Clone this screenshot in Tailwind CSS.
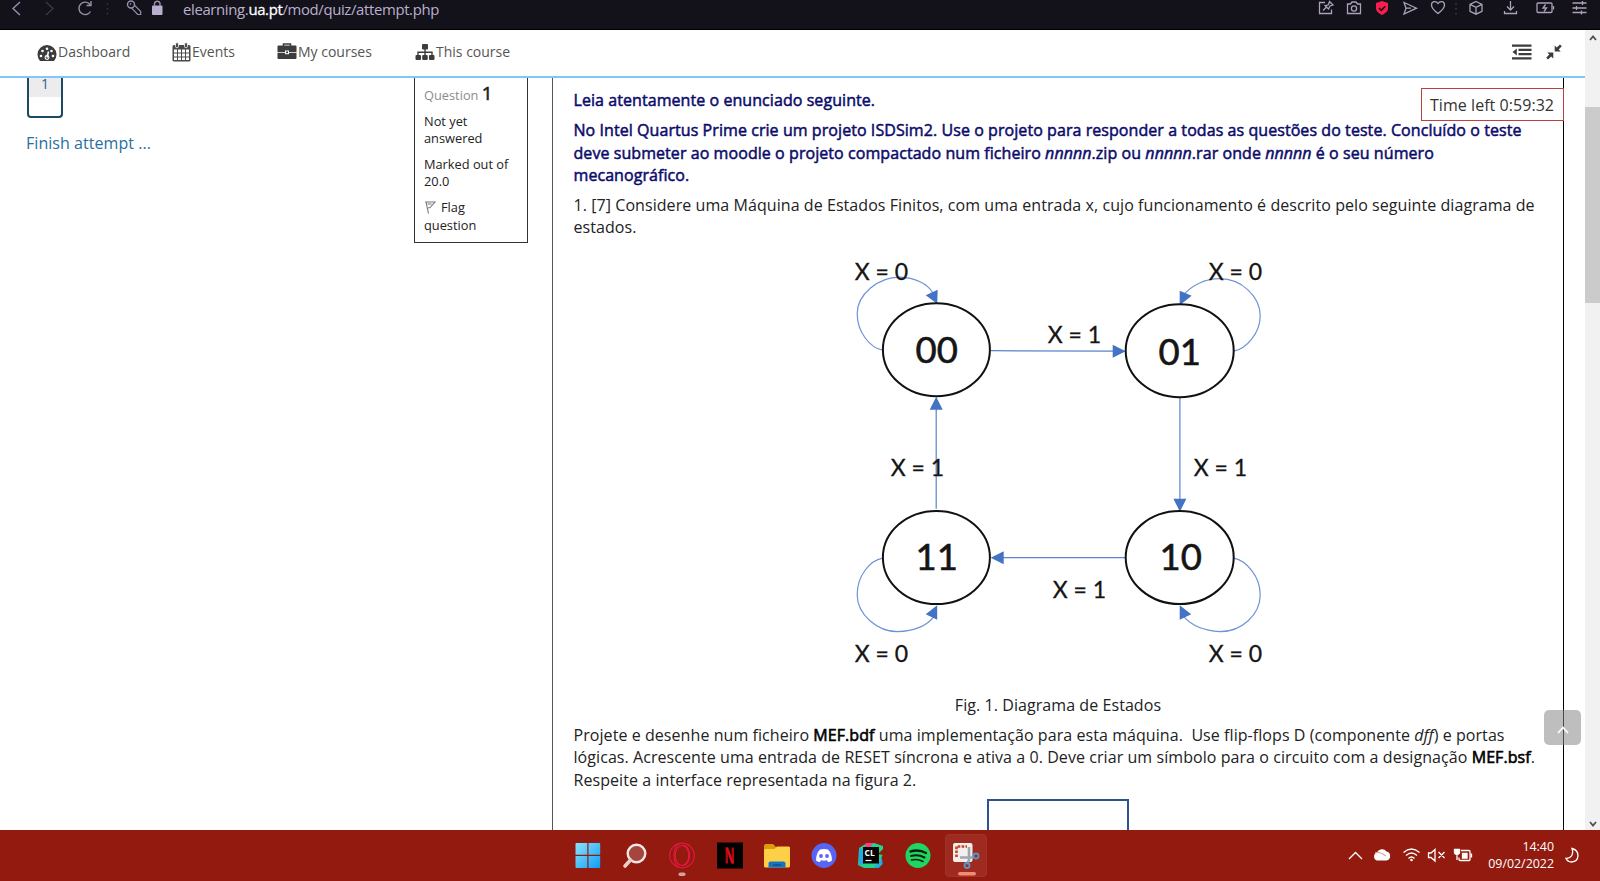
<!DOCTYPE html>
<html lang="pt">
<head>
<meta charset="utf-8">
<title>Quiz attempt</title>
<script src="https://cdn.jsdelivr.net/npm/@tailwindcss/browser@4"></script>
</head>
<body class="w-[1600px] h-[881px] overflow-hidden flex flex-col bg-white font-['Open_Sans',sans-serif] text-[#222]">

<!-- Browser toolbar -->
<header class="h-[30px] shrink-0 bg-[#13111a] flex items-start justify-between border-b border-black text-[#b9b0cc]">
  <div class="flex items-start">
    <svg class="w-[170px] h-[18px]" viewBox="0 0 170 18" fill="none" stroke="#9890ab" stroke-width="1.4">
      <path d="M20 2l-7 6.500l7 6.500"/>
      <path d="M46 2l7 6.500l-7 6.500" stroke="#3b3845"/>
      <path d="M90.500 11.500a6.200 6.200 0 1 1 -.5-7M91 1v4.500h-4.500"/>
      <path d="M107.500 3v1.500M107.500 8v1.500M107.500 13v1.500" stroke="#3b3845"/>
      <circle cx="131" cy="4.500" r="3.500"/><path d="M134.500 5.200l6.200 6.300v3h-3l-6-6.300" stroke-width="1.200"/><path d="M130 3.500l1 1"/>
      <rect x="152" y="5.500" width="10.500" height="9.500" rx="1" fill="#b9aed0" stroke="none"/><path d="M154.500 6v-2.500a2.800 2.800 0 0 1 5.500 0v2.500"/>
    </svg>
    <p class="pl-[13px] text-[14.900px] tracking-[-0.350px] leading-[20px] -mt-[1px] whitespace-nowrap">elearning.<span class="text-white [-webkit-text-stroke:0.3px_#fff]">ua.pt</span>/mod/quiz/attempt.php</p>
  </div>
  <svg class="w-[290px] h-[18px]" viewBox="1310 0 290 18" fill="none" stroke="#aaa3b8" stroke-width="1.300">
    <path d="M1325 2.500h-5.500v11h12v-4M1323 10.500l4-4M1324.500 5l4.500 4.500M1325.500 6l3-1.500l1-3l3.500 3.500l-3 1l-1.500 3"/>
    <path d="M1347.500 4h3l1.500-2h4l1.500 2h3v9.500h-13z"/><circle cx="1354" cy="8.500" r="2.600"/>
    <path d="M1382 1l6 2v5.500c0 3-3 5-6 6.500c-3-1.500-6-3.500-6-6.500V3z" fill="#fa1e4e" stroke="none"/><path d="M1379 8l2.300 2.300l4-4" stroke="#13111a" stroke-width="1.600"/>
    <path d="M1404 2.500l12.500 5.700l-12.500 5.800l2-5.800zM1406 8.200h5"/>
    <path d="M1438 13.500c-4-3-6.500-5.500-6.500-8.500c0-4 4.500-4.500 6.500-1.500c2-3 6.500-2.500 6.500 1.500c0 3-2.500 5.500-6.500 8.500z"/>
    <path d="M1456 3v1.500M1456 8v1.500M1456 13v1.500" stroke="#45414f"/>
    <path d="M1476 1.500l6 2.800v7l-6 2.900l-6-2.900v-7zM1470 4.300l6 3l6-3M1476 7.300v7"/>
    <path d="M1510.500 1v8.500M1507 6.500l3.500 3.500l3.500-3.500M1504.500 11v2.500h12v-2.500"/>
    <rect x="1537" y="3" width="15" height="9.500" rx="1"/><path d="M1553.500 6v3.500M1545.500 4.500l-2.500 3.500h3.500l-2.500 3.500"/>
    <path d="M1572.500 3h14M1572.500 8h14M1572.500 12.500h14M1582.500 1v4M1576.500 6v4M1581.500 10.500v4"/>
  </svg>
</header>

<div class="flex h-[800px] shrink-0">
  <div class="w-[1585px] flex flex-col">
    <!-- Site navigation -->
    <nav class="h-[48px] shrink-0 border-b-[2px] border-[#7fc8f5] flex items-center justify-between pl-[37px] pr-[23px] pb-[3px] text-[14px] text-[#555]">
      <div class="flex items-center">
        <a class="flex items-center w-[135px] gap-[1px]">
          <svg class="w-[20px] h-[18px] mt-[2px]" viewBox="0 0 20 18"><path d="M3 17A9.500 9.500 0 1 1 17 17z" fill="#3c3c3c"/><g fill="#fff"><circle cx="4" cy="12" r="1.300"/><circle cx="5.500" cy="7" r="1.300"/><circle cx="10" cy="4.700" r="1.300"/><circle cx="14.500" cy="7" r="1.300"/><circle cx="16" cy="12" r="1.300"/></g><circle cx="10" cy="13.500" r="2.400" fill="#fff"/><circle cx="10" cy="13.500" r="1.300" fill="#3c3c3c"/><path d="M10 13.500l1.500-6" stroke="#fff" stroke-width="1.600"/></svg>
          <span>Dashboard</span></a>
        <a class="flex items-center w-[105px] gap-[1px]">
          <svg class="w-[19px] h-[20px]" viewBox="0 0 19 20"><rect x=".5" y="3" width="18" height="16.500" rx="1.500" fill="#4a4a4a"/><g fill="#fff"><path d="M2 7.500h3v3H2zM6 7.500h3v3H6zM10 7.500h3v3h-3zM14 7.500h3v3h-3zM2 11.500h3v3H2zM6 11.500h3v3H6zM10 11.500h3v3h-3zM14 11.500h3v3h-3zM2 15.500h3v2.500H2zM6 15.500h3v2.500H6zM10 15.500h3v2.500h-3zM14 15.500h3v2.500h-3z"/></g><g fill="#4a4a4a" stroke="#fff" stroke-width=".8"><rect x="3.500" y=".7" width="3" height="5" rx="1.300"/><rect x="12.500" y=".7" width="3" height="5" rx="1.300"/></g></svg>
          <span>Events</span></a>
        <a class="flex items-center w-[138px] gap-[1px]">
          <svg class="w-[20px] h-[18px] -mt-[1px]" viewBox="0 0 20 18"><path d="M6.500 4V2h7v2" fill="none" stroke="#3c3c3c" stroke-width="1.500"/><path d="M1.500 3.500h17q1 0 1 1V10H12V8.500H8V10H.5V4.500q0-1 1-1zM.5 10.700H8v1.500h4v-1.500h7.500V16q0 1-1 1h-17q-1 0-1-1z" fill="#3c3c3c"/><rect x="9" y="9.500" width="2" height="1.700" fill="#3c3c3c"/></svg>
          <span>My courses</span></a>
        <a class="flex items-center gap-[1px]">
          <svg class="w-[20px] h-[18px]" viewBox="0 0 20 18" fill="#3c3c3c"><rect x="7" y="1" width="6" height="5.500" rx="1"/><rect x=".5" y="12" width="5.500" height="5" rx="1"/><rect x="7.200" y="12" width="5.500" height="5" rx="1"/><rect x="14" y="12" width="5.500" height="5" rx="1"/><path d="M3 12.500V9.200h14v3.300M10 6v6.500" fill="none" stroke="#3c3c3c" stroke-width="1.400"/></svg>
          <span>This course</span></a>
      </div>
      <div class="flex items-center gap-[14px]">
        <svg class="w-[20px] h-[16px]" viewBox="0 0 20 16" fill="#3c3c3c"><path d="M0 .5h19.500v2.300H0zM6.500 4.800h13v2.300h-13zM6.500 9h13v2.300h-13zM0 13.200h19.500v2.300H0zM4.800 4.500v7L.5 8z"/></svg>
        <svg class="w-[16px] h-[16px]" viewBox="0 0 16 16" fill="#3c3c3c"><path d="M8.700 1.500v6h6l-2-2L15.800 2.300L14 .4L10.800 3.500zM7.300 14.500v-6h-6l2 2L.2 13.700L2 15.600L5.200 12.500z"/></svg>
      </div>
    </nav>

    <main class="flex flex-1 items-start relative overflow-hidden">
      <!-- Quiz navigation -->
      <aside class="w-[414px] pl-[27px]">
        <div class="w-[36px] h-[40px] border-2 border-t-0 border-[#1d4a63] rounded-b-[4px]">
          <div class="h-[19px] bg-[#ececec] text-center text-[14px] leading-[11px] text-[#2f5f95]">1</div>
        </div>
        <a class="block -ml-[1px] pt-[13px] text-[16px] leading-[24px] tracking-[0.050px] text-[#2a6f9f]">Finish attempt ...</a>
      </aside>

      <!-- Question info -->
      <section class="w-[114px] h-[165px] border border-t-0 border-[#333] pl-[9px] pt-[2px] text-[12.8px] leading-[17.200px]">
        <h3 class="text-[#8d8d8d] leading-[26px] h-[26px] whitespace-nowrap">Question <span class="text-[19px] text-[#222] [-webkit-text-stroke:0.6px_#222]">1</span></h3>
        <p class="pt-[7px]">Not yet<br>answered</p>
        <p class="pt-[8.600px]">Marked out of<br>20.0</p>
        <p class="pt-[9px]"><svg class="inline w-[12px] h-[13px] -mt-[3px] mr-[5px]" viewBox="0 0 12 13" fill="none" stroke="#777" stroke-width="1.100"><path d="M1 1h10L6 6.500L4 7M2 1l2.500 11.500M3.500 3h4"/></svg>Flag<br>question</p>
      </section>

      <!-- Question text -->
      <article class="ml-[24px] w-[1012px] h-[760px] border-l border-r border-l-[#555] border-r-black pl-[20.500px] pt-[10.700px] text-[16px] leading-[22.400px] tracking-[0.067px] whitespace-nowrap">
        <div class="text-[#0b0b6b] [-webkit-text-stroke:0.5px_#0b0b6b]">
          <p>Leia atentamente o enunciado seguinte.</p>
          <p class="mt-[8px]">No Intel Quartus Prime crie um projeto ISDSim2. Use o projeto para responder a todas as questões do teste. Concluído o teste<br>deve submeter ao moodle o projeto compactado num ficheiro <i>nnnnn</i>.zip ou <i>nnnnn</i>.rar onde <i>nnnnn</i> é o seu número<br>mecanográfico.</p>
        </div>
        <p class="mt-[7.600px]">1. [7] Considere uma Máquina de Estados Finitos, com uma entrada x, cujo funcionamento é descrito pelo seguinte diagrama de<br>estados.</p>

        <svg class="block mt-[8px] w-[970px] h-[439px] tracking-normal" viewBox="574.300 246.300 970 439" font-family="Lato, sans-serif" fill="#151515">
          <g fill="none" stroke="#6f93d6" stroke-width="1.200">
            <path d="M883 349.500C870 347 857.500 331 857.500 313C857.500 294 878 276.500 900 276.500C915 277 928 283 933 292"/>
            <path d="M1234 350.500C1247 348 1260.500 332 1260.500 315C1260.500 296 1242 278 1220 278C1205 278 1192 285 1185 293"/>
            <path d="M883 557.500C870 560 857.500 575 857.500 594C857.500 614 878 631 898 631C914 630.500 928 625 934 616"/>
            <path d="M1234 557.500C1247 560 1260.500 576 1260.500 594C1260.500 614 1242 631 1220 631C1204 630 1192 625 1184 616"/>
          </g>
          <g fill="none" stroke="#5b83cc" stroke-width="1.200">
            <path d="M991 350L1115 350.500M936.500 508V408M1180.200 397V500M1126 557H1002"/>
          </g>
          <g fill="#4472c4">
            <path d="M1113 344l13 6.500l-13 6.500zM930 409l6.500-13l6.500 13zM1173.700 498l6.500 13l6.500-13zM1004 550.500l-13 6.500l13 6.500z"/>
            <path d="M926 294.500l12-5.500l-.5 14zM1180 290l12 5l-12 9.500zM937.500 604.500v14.500l-11.500-5.500zM1180 604.500l11.500 9l-11.500 5.500z"/>
          </g>
          <g fill="none" stroke="#111" stroke-width="2">
            <ellipse cx="936.700" cy="349" rx="53.500" ry="46.500"/>
            <ellipse cx="1180" cy="350" rx="54" ry="46.500"/>
            <ellipse cx="936.700" cy="556.800" rx="53.500" ry="46.500"/>
            <ellipse cx="1180" cy="556.800" rx="54" ry="46.500"/>
          </g>
          <g font-size="36.500" text-anchor="middle" stroke="#151515" stroke-width=".6">
            <text x="937" y="362.500">00</text><text x="1180" y="364">01</text><text x="937" y="569.500">11</text><text x="1181" y="569.500">10</text>
          </g>
          <g font-size="23" stroke="#151515" stroke-width=".3">
            <text x="855" y="279" textLength="53.500">X = 0</text><text x="1209" y="279" textLength="53.500">X = 0</text>
            <text x="1048" y="342.500" textLength="53.500">X = 1</text>
            <text x="891" y="475.500" textLength="53.500">X = 1</text><text x="1194" y="475.500" textLength="53.500">X = 1</text>
            <text x="1053" y="597" textLength="53.500">X = 1</text>
            <text x="855" y="661" textLength="53.500">X = 0</text><text x="1209" y="661" textLength="53.500">X = 0</text>
          </g>
        </svg>

        <p class="mt-[8px] w-[969px] text-center">Fig. 1. Diagrama de Estados</p>
        <p class="mt-[7.600px]">Projete e desenhe num ficheiro <span class="text-black [-webkit-text-stroke:0.6px_#000]">MEF.bdf</span> uma implementação para esta máquina.&nbsp; Use flip-flops D (componente <i>dff</i>) e portas<br>lógicas. Acrescente uma entrada de RESET síncrona e ativa a 0. Deve criar um símbolo para o circuito com a designação <span class="text-black [-webkit-text-stroke:0.6px_#000]">MEF.bsf</span>.<br>Respeite a interface representada na figura 2.</p>
        <div class="mt-[8px] ml-[413.500px] w-[142px] h-[60px] border-2 border-[#2f528f]"></div>
      </article>

      <div class="absolute left-[1421px] top-[10px] w-[143px] h-[33px] border border-[#b8433c] bg-white pl-[8px] text-[16px] leading-[32px] tracking-[0.050px] text-[#333] whitespace-nowrap">Time left 0:59:32</div>
      <div class="absolute left-[1544px] top-[632px] w-[37px] h-[35px] rounded-[5px] bg-[#888]/55 flex items-center justify-center">
        <svg class="w-[12px] h-[8px] mt-[4px]" viewBox="0 0 12 8" fill="none" stroke="#fff" stroke-width="1.800"><path d="M1 7l5-5.500l5 5.500"/></svg>
      </div>
    </main>
  </div>

  <!-- Scrollbar -->
  <div class="w-[15px] bg-[#f1f1f1] flex flex-col items-center">
    <svg class="w-[15px] h-[16px]" viewBox="0 0 15 16" fill="none" stroke="#505050" stroke-width="1.800"><path d="M5 10l3-3.500l3 3.500"/></svg>
    <div class="mt-[61px] w-full h-[196px] bg-[#cbcbcb]"></div>
    <svg class="mt-auto w-[15px] h-[13px]" viewBox="0 0 15 13" fill="none" stroke="#505050" stroke-width="1.800"><path d="M5 5l3 3.500l3-3.500"/></svg>
  </div>
</div>

<!-- Taskbar -->
<footer class="h-[51px] shrink-0 bg-[#921a0e] flex justify-between text-white">
  <div class="flex gap-[21.200px] pl-[575px] pt-[4px]">
    <svg class="w-[26px] h-[44px]" viewBox="0 0 26 44"><defs><linearGradient id="win" x2="1" y2="1"><stop stop-color="#8be4fb"/><stop offset="1" stop-color="#0f9cf5"/></linearGradient></defs><path d="M.5 10a1 1 0 0 1 1-1h10.800v11.700H.5zM13.500 9h10.700a1 1 0 0 1 1 1v10.700H13.500zM.5 22h11.800v12H1.500a1 1 0 0 1-1-1zM13.500 22h11.700v11a1 1 0 0 1-1 1H13.500z" fill="url(#win)"/></svg>
    <svg class="w-[26px] h-[44px]" viewBox="0 0 26 44"><circle cx="14.500" cy="19.500" r="8.800" fill="#a4463d" stroke="#f3e6e5" stroke-width="2.400"/><path d="M8.500 26L3 32" stroke="#e6d0ce" stroke-width="3.600" stroke-linecap="round"/></svg>
    <svg class="w-[26px] h-[44px]" viewBox="0 0 26 44" fill="none" stroke="#e3193f" stroke-width="1.200"><circle cx="13" cy="21.500" r="12.300"/><ellipse cx="13" cy="21.500" rx="6.800" ry="10"/><path d="M11 9.500C3 12 3 31 11 33.500M14 11.500c8-1 9.500 19 0 20"/><rect x="9.500" y="38.500" width="7" height="3.500" rx="1.700" fill="#d5a19c" stroke="none"/></svg>
    <svg class="w-[26px] h-[44px]" viewBox="0 0 26 44"><path d="M0 8.500h26v26H0z"/><path d="M9.800 13.500v16M15.800 13.500v16" stroke="#b1060f" stroke-width="2.400"/><path d="M8.600 13.500h2.600l5.800 16h-2.600z" fill="#e50914"/></svg>
    <svg class="w-[26px] h-[44px]" viewBox="0 0 26 44"><path d="M0 12q0-2 2-2h7l3 3h14v8H0z" fill="#dd9b0c"/><path d="M1.500 15h9l2.500-2.500h11.500q1.500 0 1.500 1.500v18q0 1.500-1.500 1.500h-23q-1.500 0-1.500-1.500V16.500q0-1.500 1.500-1.500z" fill="#fed048"/><path d="M4.500 33.500v-4q0-2 2-2h13q2 0 2 2v4z" fill="#1274c4"/><path d="M9 31h8" stroke="#0a4d8c" stroke-width="1.300"/></svg>
    <svg class="w-[26px] h-[44px]" viewBox="0 0 26 44"><circle cx="13" cy="21.500" r="12.500" fill="#5765f2"/><path d="M9 15.500q4-1 8 0q4 4 4 11q-2 1.500-4 1.500l-1-1.700q-3 .7-6 0L9 28q-2 0-4-1.500q0-7 4-11z" fill="#fff"/><circle cx="10" cy="22" r="1.900" fill="#5765f2"/><circle cx="16" cy="22" r="1.900" fill="#5765f2"/></svg>
    <svg class="w-[26px] h-[44px]" viewBox="0 0 26 44"><path d="M1 14l8-5h7l9 3v8l-2 5l1.500 5l-4 4H6L0 31z" fill="#20d58b"/><path d="M1 14l5 3v13l-5 1zM16 34l8-10l.5 6l-4 4z" fill="#22a9ea"/><path d="M8 9h7l-3 5l-5-1z" fill="#f0438e"/><path d="M20 20l5-5v6z" fill="#921a0e"/><path d="M5 13h16v16.500H5z" fill="#050505"/><text x="6.500" y="22" font-family="Open Sans, sans-serif" font-weight="700" font-size="8.500" fill="#fff">CL</text><path d="M7.500 26.500h6" stroke="#fff" stroke-width="1.200"/></svg>
    <svg class="w-[26px] h-[44px]" viewBox="0 0 26 44"><circle cx="13" cy="21.500" r="12.500" fill="#1fd662"/><g fill="none" stroke="#0b1f11" stroke-linecap="round"><path d="M5.500 17.500q8-2.500 15.500 1.500" stroke-width="2.400"/><path d="M6 22q7-2 13.500 1.500" stroke-width="2"/><path d="M6.500 26q6-1.500 11.500 1.500" stroke-width="1.600"/></g></svg>
    <div class="w-[42px] h-[43px] -ml-[8px] rounded-[4px] bg-[#9e2a20] border border-[#a1332a]">
      <svg class="w-[40px] h-[42px]" viewBox="0 0 40 42"><rect x="7" y="8" width="19.500" height="19" rx="2" fill="#f6eeec"/><path d="M10.500 22V11.500H21" fill="none" stroke="#c2421f" stroke-width="2.600" stroke-dasharray="2.600 1.300"/><path d="M23 12v13l-2 4M14 22.500h13" fill="none" stroke="#9aa8b1" stroke-width="2.600"/><circle cx="30" cy="21" r="2.500" fill="none" stroke="#5c93c2" stroke-width="1.900"/><circle cx="21" cy="30.500" r="2.500" fill="none" stroke="#5c93c2" stroke-width="1.900"/><rect x="12" y="37" width="18" height="3.600" rx="1.800" fill="#f08c70"/></svg>
    </div>
  </div>
  <div class="flex items-start pr-[21px]">
    <svg class="w-[128px] h-[51px]" viewBox="1346 830 128 51" fill="none" stroke="#fff" stroke-width="1.300">
      <path d="M1349 859l6.500-6.500l6.500 6.500"/>
      <path d="M1377 860.500a4.200 4.200 0 0 1 0-8a5.500 5.500 0 0 1 9.500-1a4.600 4.600 0 0 1 0 9z" fill="#fff" stroke="none"/><path d="M1375 853q4-2 11 3" stroke="#dba8a3"/>
      <path d="M1403.500 852.500q8-7 16 0M1406 855.500q5.500-5 11 0M1408.500 858.500q3-3 6 0"/><circle cx="1411.500" cy="860" r="1.300" fill="#fff" stroke="none"/>
      <path d="M1428.500 853h2.500l4-3.500v11.500l-4-3.500h-2.500zM1438.500 852l6 6M1444.500 852l-6 6"/>
      <path d="M1461 850.500h8q1 0 1 1v8q0 1-1 1h-9q-1 0-1-1v-2M1471.500 853.500v4"/><path d="M1462.500 853.500h4.500v4.500h-4.500z" fill="#fff"/><path d="M1454.500 849.500h5v3.500q-2.500 3-5 0zM1457 855v5" fill="#fff"/>
    </svg>
    <div class="w-[80px] pt-[8px] text-right text-[12.400px] leading-[17px] whitespace-nowrap">14:40<br>09/02/2022</div>
    <svg class="ml-[11px] mt-[17px] w-[14px] h-[17px]" viewBox="0 0 14 17" fill="none" stroke="#fff" stroke-width="1.300"><path d="M7 1.500c8 2 8 13-.5 13.500c-2.500 0-4.500-1.500-5.500-3.500c5 0 8-4 6-10z"/></svg>
  </div>
</footer>
</body>
</html>
